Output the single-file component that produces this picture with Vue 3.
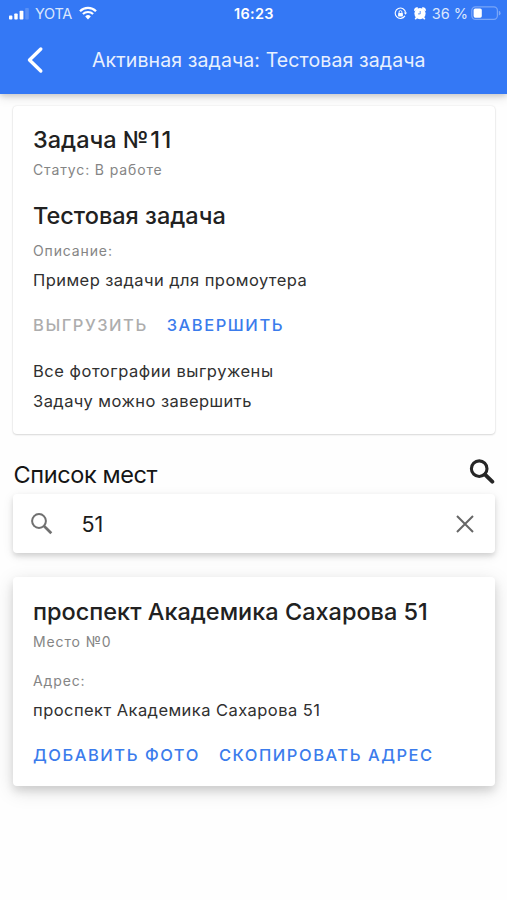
<script setup>
import { ref } from 'vue'

const query = ref('51')
const status = { carrier: 'YOTA', time: '16:23', battery: '36 %' }
const task = {
  number: '№11',
  status: 'Статус: В работе',
  name: 'Тестовая задача',
  description: 'Пример задачи для промоутера',
}
const place = {
  title: 'проспект Академика Сахарова 51',
  number: 'Место №0',
  address: 'проспект Академика Сахарова 51',
}
</script>

<template>
  <div class="screen">
    <header class="top">
      <div class="statusbar">
        <div class="side">
          <svg class="signal" width="20" height="12" viewBox="0 0 20 12" fill="#fff">
            <rect x="0" y="7.6" width="3.4" height="4" rx="0.8" />
            <rect x="5.3" y="5.4" width="3.4" height="6.2" rx="0.8" />
            <rect x="10.6" y="2.8" width="3.8" height="8.8" rx="0.8" />
            <rect x="16.2" y="0" width="3.6" height="11.6" rx="0.8" opacity="0.18" />
          </svg>
          <span class="carrier">{{ status.carrier }}</span>
          <svg class="wifi" width="18" height="14" viewBox="0 0 18 14" fill="none" stroke="#fff">
            <path d="M1 5.2A11.4 11.4 0 0 1 17 5.2" stroke-width="2.3" />
            <path d="M3.9 8.1A7.3 7.3 0 0 1 14.1 8.1" stroke-width="2.1" />
            <path d="M9 13.4 6.2 10.4A4 4 0 0 1 11.8 10.4Z" fill="#fff" stroke="none" />
          </svg>
        </div>
        <span class="time">{{ status.time }}</span>
        <div class="side right">
          <svg class="lock" width="13" height="13" viewBox="0 0 13 13" fill="none" stroke="#fff">
            <path d="M10.9 8.9A5.2 5.2 0 1 1 11.6 5.6" stroke-width="1.1" />
            <path d="M9.9 5.5H13L11.5 7.8Z" fill="#fff" stroke="none" />
            <rect x="4.1" y="5.9" width="4.8" height="3.5" rx="0.6" fill="#fff" stroke="none" />
            <path d="M5.1 6V5A1.4 1.4 0 0 1 7.9 5V6" stroke-width="0.9" />
          </svg>
          <svg class="alarm" width="12" height="13" viewBox="0 0 12 13">
            <path d="M0.9 3.2A2 2 0 0 1 3.2 1.2ZM11.1 3.2A2 2 0 0 0 8.8 1.2Z" fill="#fff" stroke="#fff" stroke-width="1.7" stroke-linejoin="round" />
            <path d="M2.6 10.4 1.6 11.7M9.4 10.4 10.4 11.7" stroke="#fff" stroke-width="1.7" stroke-linecap="round" />
            <circle cx="6" cy="6.6" r="5.6" fill="#fff" />
            <path d="M6.2 4V6.9H4" fill="none" stroke="#3478f5" stroke-width="0.8" />
          </svg>
          <span class="percent">{{ status.battery }}</span>
          <svg class="battery" width="30" height="15" viewBox="0 0 30 15">
            <rect x="0.8" y="0.8" width="25.6" height="12.6" rx="3.6" fill="none" stroke="#fff" stroke-opacity="0.34" stroke-width="1.2" />
            <rect x="2.6" y="2.5" width="8.2" height="9.2" rx="1.6" fill="#fff" />
            <path d="M27.8 4.8A2.5 2.5 0 0 1 27.8 9.6Z" fill="#fff" fill-opacity="0.36" />
          </svg>
        </div>
      </div>
      <div class="navbar">
        <svg class="back" width="18" height="28" viewBox="0 0 18 28" fill="none" stroke="#fff" stroke-width="3.4" stroke-linecap="round" stroke-linejoin="round">
          <path d="M14.8 3 3.5 14 14.8 25" />
        </svg>
        <h1>Активная задача: Тестовая задача</h1>
      </div>
    </header>

    <main>
      <section class="card task">
        <h2>Задача <span class="number">{{ task.number }}</span></h2>
        <p class="caption c-status">{{ task.status }}</p>
        <h2 class="name">{{ task.name }}</h2>
        <p class="caption c-desc">Описание:</p>
        <p class="body">{{ task.description }}</p>
        <div class="actions">
          <button disabled>Выгрузить</button>
          <button>Завершить</button>
        </div>
        <p class="body done">Все фотографии выгружены</p>
        <p class="body last">Задачу можно завершить</p>
      </section>

      <div class="list-head">
        <h3>Список мест</h3>
        <svg width="26" height="26" viewBox="0 0 26 26" fill="none" stroke="#262626">
          <circle cx="10.2" cy="9.7" r="7.8" stroke-width="3.1" />
          <path d="M16.1 15.6 23.3 22.7" stroke-width="3.9" stroke-linecap="round" />
        </svg>
      </div>

      <div class="search">
        <svg width="22" height="22" viewBox="0 0 22 22" fill="none" stroke="#707070">
          <circle cx="8" cy="8" r="6.9" stroke-width="2" />
          <path d="M13 13 20.3 20.3" stroke-width="2.7" />
        </svg>
        <input v-model="query" type="text" />
        <svg class="clear" width="18" height="18" viewBox="0 0 18 18" fill="none" stroke="#666" stroke-width="2">
          <path d="M1 1 17 17M17 1 1 17" />
        </svg>
      </div>

      <section class="card place">
        <h2>{{ place.title }}</h2>
        <p class="caption c-number">{{ place.number }}</p>
        <p class="caption c-addr">Адрес:</p>
        <p class="body b-addr">{{ place.address }}</p>
        <div class="actions">
          <button>Добавить фото</button>
          <button>Скопировать адрес</button>
        </div>
      </section>
    </main>
  </div>
</template>

<style>
body {
  background: #fefefe;
}
</style>

<style scoped>
.screen {
  height: 900px;
  overflow: hidden;
  background: #fefefe;
  font-family: Inter, "Liberation Sans", sans-serif;
  color: #212121;
}
h1, h2, h3, p {
  margin: 0;
  font-weight: 400;
  white-space: nowrap;
}
svg {
  display: block;
  flex: none;
}
.top {
  height: 94px;
  background: #3478f5;
  color: #fff;
  box-shadow: 0 2px 5px rgba(0, 0, 0, 0.14), 0 4px 10px rgba(0, 0, 0, 0.1);
}
.statusbar {
  display: grid;
  grid-template-columns: 1fr auto 1fr;
  align-items: center;
  height: 27px;
  padding: 0 8px 0 9px;
}
.side {
  display: flex;
  align-items: center;
}
.right {
  justify-content: flex-end;
  margin-right: -2px;
}
.carrier {
  margin-left: 6px;
  font-size: 14.5px;
  letter-spacing: -0.3px;
  color: #dbe7fd;
}
.wifi {
  margin-left: 7px;
  margin-bottom: 1px;
}
.time {
  font-size: 14.5px;
  font-weight: 600;
  letter-spacing: 0.3px;
}
.alarm {
  margin-left: 7px;
}
.percent {
  margin-left: 6px;
  font-size: 14.5px;
  color: #dbe7fd;
}
.battery {
  margin-left: 3px;
}
.navbar {
  display: flex;
  align-items: center;
  height: 66px;
  padding-left: 26px;
}
.navbar h1 {
  margin-left: 48px;
  font-size: 19.5px;
  letter-spacing: 0.11px;
  color: #e8f0fe;
}
main {
  padding: 12px 12px 0 13px;
}
.card {
  border-radius: 4px;
  background: #fff;
  padding: 0 20px;
  box-sizing: border-box;
}
.task {
  height: 328px;
  padding-top: 20px;
  box-shadow: 0 0 2px rgba(0, 0, 0, 0.12), 0 1px 2px rgba(0, 0, 0, 0.12);
}
.card h2 {
  font-size: 23.5px;
  line-height: 28px;
  font-weight: 500;
}
.number {
  letter-spacing: 1.6px;
}
.caption {
  font-size: 14px;
  line-height: 20px;
  letter-spacing: 0.87px;
  color: #858585;
}
.c-status {
  margin-top: 6px;
}
.name {
  margin-top: 22px;
}
.c-desc {
  margin-top: 11px;
}
.body {
  font-size: 16.5px;
  line-height: 29.5px;
  letter-spacing: 0.44px;
  color: #303030;
}
.done {
  letter-spacing: 0.52px;
}
.last {
  padding-top: 0.5px;
}
.c-desc + .body {
  margin-top: 5px;
}
.actions {
  display: flex;
  gap: 19px;
  height: 30px;
  margin: 14px 0 17px;
}
.actions button {
  padding: 0;
  border: 0;
  background: none;
  font: 500 16.5px/30px Inter, "Liberation Sans", sans-serif;
  letter-spacing: 1.54px;
  text-transform: uppercase;
  white-space: nowrap;
  color: #3b7cec;
}
.actions button:disabled {
  color: #adadad;
}
.list-head {
  display: flex;
  align-items: center;
  justify-content: space-between;
  height: 60px;
  padding-top: 1px;
  box-sizing: border-box;
}
.list-head svg {
  margin-top: 14px;
}
.list-head h3 {
  padding: 20px 0 0 0.5px;
  font-size: 23.5px;
  line-height: 28px;
  letter-spacing: -0.4px;
  color: #151515;
}
.search {
  display: flex;
  align-items: center;
  height: 59px;
  padding: 0 21px 0 18px;
  border-radius: 4px;
  background: #fff;
  box-shadow: 0 3px 5px rgba(0, 0, 0, 0.12), 0 3px 12px rgba(0, 0, 0, 0.09);
}
.search input {
  flex: 1;
  min-width: 0;
  margin-left: 28.5px;
  padding: 0;
  border: 0;
  outline: 0;
  background: none;
  font: 400 21.5px/28px Inter, "Liberation Sans", sans-serif;
  color: #1b1b1b;
}
.place {
  height: 209px;
  margin-top: 24px;
  padding-top: 21px;
  box-shadow: 0 5px 8px rgba(0, 0, 0, 0.11), 0 5px 20px rgba(0, 0, 0, 0.13);
}
.c-number {
  margin-top: 6px;
}
.c-addr {
  margin-top: 19px;
}
.c-addr + .body {
  margin-top: 5px;
}
</style>
